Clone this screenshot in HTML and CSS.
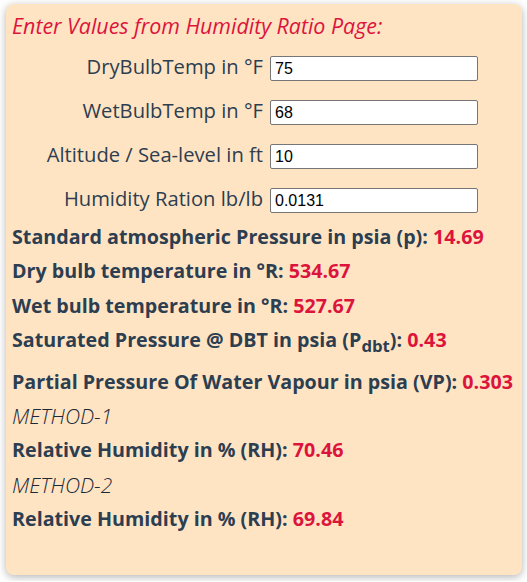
FILE: index.html
```html
<!DOCTYPE html>
<html>
<head>
<meta charset="utf-8">
<link rel="stylesheet" href="styles.css">
</head>
<body>
<div class="card">
  <div class="title">Enter Values from Humidity Ratio Page:</div>
  <div class="form">
    <label class="label">DryBulbTemp in °F</label><input class="field" type="text" value="75">
    <label class="label">WetBulbTemp in °F</label><input class="field" type="text" value="68">
    <label class="label">Altitude / Sea-level in ft</label><input class="field" type="text" value="10">
    <label class="label">Humidity Ration lb/lb</label><input class="field" type="text" value="0.0131">
  </div>
  <div class="results">
    <div class="line">Standard atmospheric Pressure in psia (p): <span class="val">14.69</span></div>
    <div class="line">Dry bulb temperature in °R: <span class="val">534.67</span></div>
    <div class="line">Wet bulb temperature in °R: <span class="val">527.67</span></div>
    <div class="line line-sub">Saturated Pressure @ DBT in psia (P<sub>dbt</sub>): <span class="val">0.43</span></div>
    <div class="line">Partial Pressure Of Water Vapour in psia (VP): <span class="val">0.303</span></div>
    <div class="method">METHOD-1</div>
    <div class="line">Relative Humidity in % (RH): <span class="val">70.46</span></div>
    <div class="method">METHOD-2</div>
    <div class="line">Relative Humidity in % (RH): <span class="val">69.84</span></div>
  </div>
</div>
</body>
</html>
```
FILE: styles.css
```css
html, body {
  margin: 0;
  background: #ffffff;
}
body {
  padding: 4px 5px 6px 6px;
  font-family: "Open Sans", "Noto Sans", sans-serif;
  color: #2c3e50;
}
.card {
  width: 516px;
  box-sizing: border-box;
  background: #ffe4c4;
  border-radius: 8px;
  box-shadow: 0 2px 8px rgba(0, 0, 0, 0.3);
  padding: 7px 6px 39px 6px;
}
.title {
  font-style: italic;
  font-size: 21.4px;
  line-height: 30px;
  color: #dc143c;
}
.form {
  display: grid;
  grid-template-columns: 251px 208px;
  column-gap: 7px;
  row-gap: 19px;
  margin-top: 15px;
}
.label {
  text-align: right;
  font-size: 20.2px;
  line-height: 20px;
  align-self: start;
  white-space: nowrap;
}
.field {
  box-sizing: border-box;
  width: 208px;
  height: 25px;
  margin: 0;
  padding: 0 4px;
  border: 1px solid #767676;
  border-radius: 2px;
  background: #ffffff;
  font-family: "Liberation Sans", Arial, sans-serif;
  font-size: 16px;
  color: #000000;
}
.results {
  margin-top: 7px;
}
.line {
  font-weight: 700;
  font-size: 19.7px;
  line-height: 34.3px;
  white-space: nowrap;
}
.line-sub {
  margin-bottom: 7.5px;
}
.line sub {
  font-size: 0.85em;
  line-height: 0;
  vertical-align: -5px;
}
.val {
  color: #dc143c;
}
.method {
  font-style: italic;
  font-weight: 300;
  font-size: 21px;
  line-height: 34.3px;
  color: #1c2a38;
}
```
